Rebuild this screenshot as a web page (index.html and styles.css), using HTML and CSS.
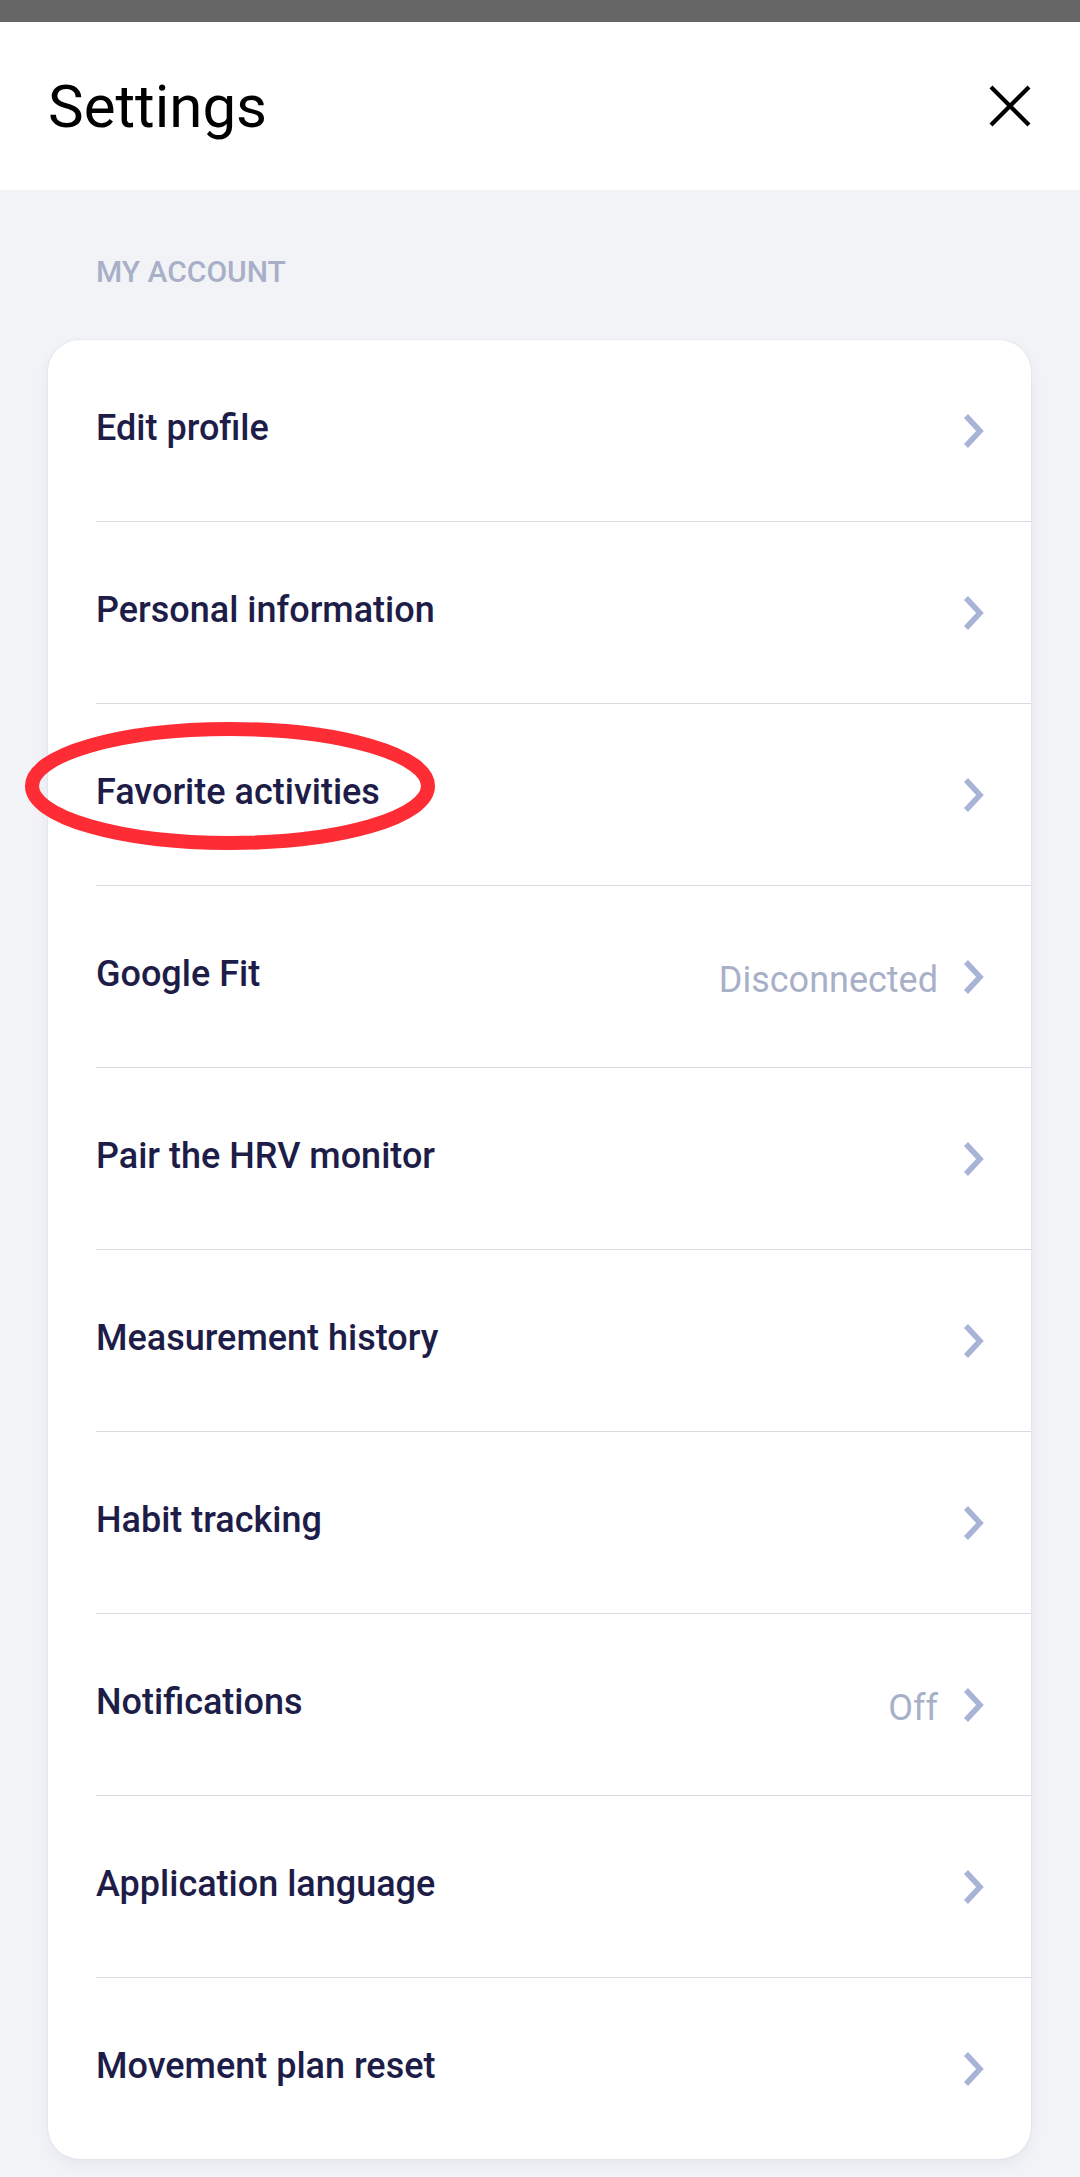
FILE: index.html
```html
<!DOCTYPE html>
<html lang="en">
<head>
<meta charset="utf-8">
<title>Settings</title>
<link rel="stylesheet" href="styles.css">
</head>
<body>
<div class="statusbar"></div>
<header class="header">
  <h1 class="title">Settings</h1>
  <button class="close" aria-label="Close">
    <svg width="42" height="42" viewBox="0 0 42 42"><path d="M2 2 L40 40 M40 2 L2 40" stroke="#000" stroke-width="4.2" fill="none"/></svg>
  </button>
</header>
<main class="content">
  <div class="section-label">MY ACCOUNT</div>
  <div class="card">
    <div class="row"><span class="label">Edit profile</span><span class="right"><svg class="chev" width="24" height="38" viewBox="0 0 24 38"><path d="M4 4 L18 19 L4 34" /></svg></span></div>
    <div class="row"><span class="label">Personal information</span><span class="right"><svg class="chev" width="24" height="38" viewBox="0 0 24 38"><path d="M4 4 L18 19 L4 34" /></svg></span></div>
    <div class="row highlighted"><span class="label">Favorite activities</span><span class="right"><svg class="chev" width="24" height="38" viewBox="0 0 24 38"><path d="M4 4 L18 19 L4 34" /></svg></span>
      <svg class="circle" width="440" height="140" viewBox="0 0 440 140"><ellipse cx="206" cy="70" rx="198" ry="57" fill="none" stroke="#fe2c34" stroke-width="14"/></svg>
    </div>
    <div class="row"><span class="label">Google Fit</span><span class="right"><span class="status">Disconnected</span><svg class="chev" width="24" height="38" viewBox="0 0 24 38"><path d="M4 4 L18 19 L4 34" /></svg></span></div>
    <div class="row"><span class="label">Pair the HRV monitor</span><span class="right"><svg class="chev" width="24" height="38" viewBox="0 0 24 38"><path d="M4 4 L18 19 L4 34" /></svg></span></div>
    <div class="row"><span class="label">Measurement history</span><span class="right"><svg class="chev" width="24" height="38" viewBox="0 0 24 38"><path d="M4 4 L18 19 L4 34" /></svg></span></div>
    <div class="row"><span class="label">Habit tracking</span><span class="right"><svg class="chev" width="24" height="38" viewBox="0 0 24 38"><path d="M4 4 L18 19 L4 34" /></svg></span></div>
    <div class="row"><span class="label">Notifications</span><span class="right"><span class="status">Off</span><svg class="chev" width="24" height="38" viewBox="0 0 24 38"><path d="M4 4 L18 19 L4 34" /></svg></span></div>
    <div class="row"><span class="label">Application language</span><span class="right"><svg class="chev" width="24" height="38" viewBox="0 0 24 38"><path d="M4 4 L18 19 L4 34" /></svg></span></div>
    <div class="row"><span class="label">Movement plan reset</span><span class="right"><svg class="chev" width="24" height="38" viewBox="0 0 24 38"><path d="M4 4 L18 19 L4 34" /></svg></span></div>
  </div>
</main>
</body>
</html>
```
FILE: styles.css
```css
* { box-sizing: border-box; }
html, body {
  margin: 0;
  padding: 0;
  background: #f2f3f7;
  font-family: Roboto, "Liberation Sans", sans-serif;
}
.statusbar {
  height: 22px;
  background: #666666;
}
.header {
  height: 168px;
  background: #ffffff;
  display: flex;
  align-items: center;
  justify-content: space-between;
  padding: 0 49px 0 48px;
}
.title {
  margin: 0;
  font-size: 60px;
  font-weight: 400;
  color: #000;
  line-height: 70px;
  padding-top: 2px;
}
.close {
  border: 0;
  background: none;
  padding: 0;
  width: 42px;
  height: 42px;
  display: block;
}
.close svg { display: block; }
.content {
  padding: 64px 49px 20px 48px;
}
.section-label {
  font-size: 30px;
  line-height: 36px;
  font-weight: 500;
  color: #a8b0c8;
  padding-left: 48px;
  margin-bottom: 50px;
}
.card {
  background: #ffffff;
  border-radius: 32px;
  padding-left: 48px;
  box-shadow: 0 0 0 1px rgba(220, 224, 232, 0.5), 0 6px 14px rgba(40, 50, 80, 0.06);
  overflow: visible;
}
.row {
  position: relative;
  height: 181px;
  display: flex;
  align-items: center;
  justify-content: space-between;
  padding-right: 45px;
}
.row + .row {
  border-top: 1px solid #d8dce2;
  height: 182px;
}
.label {
  font-size: 36px;
  font-weight: 500;
  color: #1e1d48;
  padding-bottom: 6px;
}
.right {
  display: flex;
  align-items: center;
  gap: 24px;
}
.status {
  font-size: 36px;
  font-weight: 400;
  color: #a8b0c8;
  padding-top: 6px;
}
.chev {
  display: block;
}
.chev path {
  fill: none;
  stroke: #a8b3d6;
  stroke-width: 5.5;
}
.circle {
  position: absolute;
  left: -72px;
  top: 12px;
  pointer-events: none;
}
```
